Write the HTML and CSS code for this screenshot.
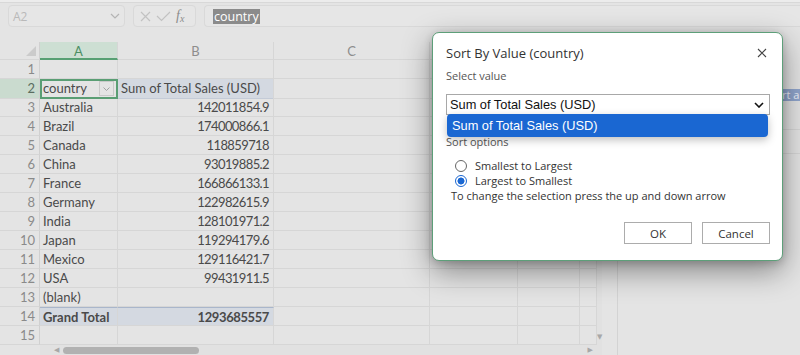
FILE: index.html
```html
<!DOCTYPE html>
<html>
<head>
<meta charset="utf-8">
<title>Sort By Value</title>
<link rel="stylesheet" href="styles.css">
</head>
<body>
<div class="app">
  <div class="topline"></div>
  <div class="fbar">
    <div class="namebox">
      <span class="nb-text">A2</span>
      <svg class="nb-chev" width="10" height="6" viewBox="0 0 10 6"><path d="M1 1l4 4 4-4" fill="none" stroke="#b4b4b4" stroke-width="1.2"/></svg>
    </div>
    <div class="fxbox">
      <svg width="11" height="11" viewBox="0 0 11 11"><path d="M1 1l9 9M10 1l-9 9" stroke="#c2c2c2" stroke-width="1.2"/></svg>
      <svg width="15" height="11" viewBox="0 0 15 11"><path d="M1 5l4.5 4.5L14 1" fill="none" stroke="#c2c2c2" stroke-width="1.2"/></svg>
      <span class="fx">f<span class="fxs">x</span></span>
    </div>
    <div class="formula"><span class="sel">country</span></div>
  </div>
  <div class="work">
    <div class="sheet">
      <div class="row head">
        <div class="c rh corner"><span class="tri"></span></div>
        <div class="c ch cha">A</div>
        <div class="c ch">B</div>
        <div class="c ch">C</div>
        <div class="c ch"></div>
        <div class="c ch"></div>
        <div class="c ch"></div>
      </div>
      <div class="row"><div class="c rh">1</div><div class="c"></div><div class="c"></div><div class="c"></div><div class="c"></div><div class="c"></div><div class="c"></div></div>
      <div class="row r2"><div class="c rh rhsel">2</div><div class="c asel">country<span class="ddbtn"><svg width="7" height="4" viewBox="0 0 7 4"><path d="M.5.5l3 3 3-3" fill="none" stroke="#9a9a9a" stroke-width=".9"/></svg></span></div><div class="c bhdr">Sum of Total Sales (USD)</div><div class="c"></div><div class="c"></div><div class="c"></div><div class="c"></div></div>
      <div class="row"><div class="c rh">3</div><div class="c">Australia</div><div class="c num">142011854.9</div><div class="c"></div><div class="c"></div><div class="c"></div><div class="c"></div></div>
      <div class="row"><div class="c rh">4</div><div class="c">Brazil</div><div class="c num">174000866.1</div><div class="c"></div><div class="c"></div><div class="c"></div><div class="c"></div></div>
      <div class="row"><div class="c rh">5</div><div class="c">Canada</div><div class="c num">118859718</div><div class="c"></div><div class="c"></div><div class="c"></div><div class="c"></div></div>
      <div class="row"><div class="c rh">6</div><div class="c">China</div><div class="c num">93019885.2</div><div class="c"></div><div class="c"></div><div class="c"></div><div class="c"></div></div>
      <div class="row"><div class="c rh">7</div><div class="c">France</div><div class="c num">166866133.1</div><div class="c"></div><div class="c"></div><div class="c"></div><div class="c"></div></div>
      <div class="row"><div class="c rh">8</div><div class="c">Germany</div><div class="c num">122982615.9</div><div class="c"></div><div class="c"></div><div class="c"></div><div class="c"></div></div>
      <div class="row"><div class="c rh">9</div><div class="c">India</div><div class="c num">128101971.2</div><div class="c"></div><div class="c"></div><div class="c"></div><div class="c"></div></div>
      <div class="row"><div class="c rh">10</div><div class="c">Japan</div><div class="c num">119294179.6</div><div class="c"></div><div class="c"></div><div class="c"></div><div class="c"></div></div>
      <div class="row"><div class="c rh">11</div><div class="c">Mexico</div><div class="c num">129116421.7</div><div class="c"></div><div class="c"></div><div class="c"></div><div class="c"></div></div>
      <div class="row"><div class="c rh">12</div><div class="c">USA</div><div class="c num">99431911.5</div><div class="c"></div><div class="c"></div><div class="c"></div><div class="c"></div></div>
      <div class="row"><div class="c rh">13</div><div class="c">(blank)</div><div class="c"></div><div class="c"></div><div class="c"></div><div class="c"></div><div class="c"></div></div>
      <div class="row total"><div class="c rh">14</div><div class="c tot">Grand Total</div><div class="c tot num">1293685557</div><div class="c"></div><div class="c"></div><div class="c"></div><div class="c"></div></div>
      <div class="row"><div class="c rh">15</div><div class="c"></div><div class="c"></div><div class="c"></div><div class="c"></div><div class="c"></div><div class="c"></div></div>
      <div class="hscroll">
        <span class="arr">&#9664;</span>
        <span class="thumb"></span>
        <span class="spacer"></span>
        <span class="arr">&#9654;</span>
      </div>
    </div>
    <div class="vscroll"><span class="arr">&#9660;</span></div>
    <div class="pane">
      <div class="pane-row p1"><span class="chip">Sort a</span></div>
      <div class="pane-row p2"></div>
      <div class="pane-row p3"></div>
    </div>
  </div>
</div>

<div class="dialog">
  <div class="dlg-head">
    <span class="dlg-title">Sort By Value (country)</span>
    <svg class="close" width="10" height="10" viewBox="0 0 10 10"><path d="M1 1l8 8M9 1l-8 8" stroke="#444" stroke-width="1.1"/></svg>
  </div>
  <div class="lbl">Select value</div>
  <div class="select">
    <span>Sum of Total Sales (USD)</span>
    <svg width="10" height="6" viewBox="0 0 10 6"><path d="M1 1l4 4 4-4" fill="none" stroke="#111" stroke-width="1.6"/></svg>
  </div>
  <div class="lbl opts">Sort options</div>
  <div class="radios">
    <div class="radio"><span class="dot"></span>Smallest to Largest</div>
    <div class="radio"><span class="dot on"></span>Largest to Smallest</div>
  </div>
  <div class="hint">To change the selection press the up and down arrow</div>
  <div class="btns">
    <div class="btn">OK</div>
    <div class="btn">Cancel</div>
  </div>
  <div class="listbox">Sum of Total Sales (USD)</div>
</div>
</body>
</html>
```

FILE: styles.css
```css
* { box-sizing: border-box; }
html, body { margin: 0; padding: 0; }
body {
  width: 800px;
  height: 355px;
  overflow: hidden;
  background: #e4e4e4;
  font-family: "Lato", "Liberation Sans", sans-serif;
  position: relative;
}
.app { display: flex; flex-direction: column; height: 355px; }
.topline { height: 3px; background: #ececec; border-bottom: 1px solid #d8d8d8; }
.fbar {
  display: flex;
  align-items: stretch;
  height: 22px;
  margin-top: 2px;
  padding-left: 8px;
  gap: 8px;
}
.namebox {
  width: 117px;
  border: 1px solid #d9d9d9;
  border-radius: 4px;
  background: #e6e6e6;
  display: flex;
  align-items: center;
  justify-content: space-between;
  padding: 0 4px 0 4px;
}
.nb-text { color: #b9b9b9; font-family: "Open Sans", sans-serif; font-size: 12px; }
.fxbox {
  width: 63px;
  border: 1px solid #d9d9d9;
  border-radius: 4px;
  background: #e6e6e6;
  display: flex;
  align-items: center;
  gap: 5px;
  padding-left: 6px;
}
.fx { font-family: "Liberation Serif", serif; font-style: italic; color: #8c8c8c; font-size: 14px; line-height: 1; }
.fxs { font-size: 10px; vertical-align: -2px; }
.formula {
  flex: 1;
  border: 1px solid #d9d9d9;
  border-right: none;
  border-radius: 4px 0 0 4px;
  background: #e6e6e6;
  display: flex;
  align-items: center;
  padding-left: 8px;
}
.sel {
  background: #8b8b8b;
  color: #fff;
  font-family: "Open Sans", sans-serif;
  font-size: 12.5px;
  line-height: 15px;
  padding: 0 1px;
}
.work { display: flex; margin-top: 15px; flex: 1; }
.sheet { width: 597px; display: flex; flex-direction: column; }
.row {
  display: grid;
  grid-template-columns: 40px 78px 156px 156px 88px 62px 17px;
  height: 19px;
}
.row.head { height: 18px; }
.c {
  border-right: 1px solid #d6d6d6;
  border-bottom: 1px solid #d6d6d6;
  font-size: 13px;
  color: #4a4a4a;
  line-height: 19px;
  padding: 0 3px;
  white-space: nowrap;
  overflow: hidden;
  position: relative;
}
.rh {
  text-align: right;
  color: #8a8a8a;
  padding-right: 4px;
  border-right: 1px solid #d0d0d0;
  font-size: 13px;
}
.ch { text-align: center; color: #8d8d8d; font-size: 13px; line-height: 18px; }
.cha { background: #cddfd3; color: #4b8e63; border-bottom: 2px solid #57a073; }
.corner { display: flex; align-items: flex-end; justify-content: flex-end; padding: 0 3px 3px 0; }
.tri {
  width: 0; height: 0;
  border-left: 10px solid transparent;
  border-bottom: 10px solid #cbcbcb;
}
.rhsel { background: #cadbcf; color: #5a6d60; }
.asel { outline: 2px solid #5a9e74; outline-offset: -2px; overflow: visible; z-index: 1; }
.ddbtn {
  position: absolute;
  right: 3px;
  top: 2px;
  width: 15px;
  height: 15px;
  border: 1px solid #c9c9c9;
  background: #e4e4e4;
  display: flex;
  align-items: center;
  justify-content: center;
}
.bhdr { background: #d4d9e1; border-bottom: 1px solid #c4cbd7; }
.num { text-align: right; padding-right: 4px; letter-spacing: -0.6px; }
.total .tot { background: #d4d9e1; font-weight: 700; border-top: 1px solid #a9b6cb; line-height: 18px; }
.total .tot.num { letter-spacing: -0.4px; }
.hscroll {
  height: 10px;
  margin-left: 40px;
  display: flex;
  align-items: center;
  gap: 4px;
  padding: 0 4px 0 14px;
  background: #e1e1e1;
}
.arr { font-size: 7px; color: #a8a8a8; line-height: 1; font-family: "DejaVu Sans", sans-serif; }
.thumb { width: 136px; height: 7px; border-radius: 4px; background: #b1b1b1; }
.spacer { flex: 1; }
.vscroll {
  width: 13px;
  display: flex;
  flex-direction: column;
  justify-content: flex-end;
  align-items: center;
  padding-bottom: 14px;
  background: #e1e1e1;
}
.pane {
  margin-left: 15px;
  flex: 1;
  border-left: 1px solid #d3d3d3;
  background: #e4e4e4;
  display: flex;
  flex-direction: column;
}
.pane-row { border-bottom: 1px solid #d6d6d6; }
.p1 { height: 57px; padding: 41px 0 0 148px; }
.p2 { height: 31px; }
.p3 { height: 24px; }
.chip {
  display: inline-block;
  background: #90a5cc;
  color: #eef2fa;
  font-family: "Open Sans", sans-serif;
  font-size: 11px;
  line-height: 12px;
  white-space: nowrap;
  padding: 0 3px;
}

/* dialog */
.dialog {
  position: absolute;
  left: 432px;
  top: 32px;
  width: 351px;
  height: 229px;
  background: #fff;
  border: 1px solid #5d9f79;
  border-radius: 7px;
  box-shadow: 0 10px 30px rgba(0,0,0,0.42), 0 2px 8px rgba(0,0,0,0.18);
  padding: 10px 12px 0 13px;
  font-family: "Open Sans", sans-serif;
  color: #333;
}
.dlg-head { display: flex; justify-content: space-between; align-items: center; height: 20px; }
.dlg-title { font-size: 13px; color: #333; }
.close { margin-right: 3px; }
.lbl { font-size: 11px; color: #555; margin-top: 4px; height: 18px; line-height: 18px; }
.select {
  margin-top: 9px;
  width: 324px;
  height: 21px;
  border: 1px solid #a8a8a8;
  display: flex;
  align-items: center;
  justify-content: space-between;
  padding: 0 5px 0 3px;
  font-family: "Liberation Sans", sans-serif;
  font-size: 12.8px;
  color: #111;
}
.opts { margin-top: 18px; }
.radios { margin-top: 7px; padding-left: 9px; }
.radio { display: flex; align-items: center; height: 15px; font-size: 11px; color: #333; gap: 8px; }
.dot {
  width: 12px; height: 12px;
  border: 1px solid #666;
  border-radius: 50%;
  background: #fff;
}
.dot.on { border-color: #1a67d2; background: radial-gradient(circle, #1a67d2 0 3.2px, #fff 3.8px); }
.hint { font-size: 11px; color: #333; padding-left: 5px; height: 15px; line-height: 15px; }
.btns { display: flex; justify-content: flex-end; gap: 10px; margin-top: 19px; }
.btn {
  width: 68px;
  height: 22px;
  border: 1px solid #acacac;
  background: #fff;
  font-size: 11.5px;
  color: #333;
  display: flex;
  align-items: center;
  justify-content: center;
}
.listbox {
  position: absolute;
  left: 14px;
  top: 81px;
  width: 321px;
  height: 23px;
  border-radius: 4px;
  background: #1a67d2;
  color: #fff;
  font-family: "Liberation Sans", sans-serif;
  font-size: 12.8px;
  line-height: 23px;
  padding-left: 5px;
  box-shadow: 0 3px 8px rgba(0,0,0,0.25);
}
```
